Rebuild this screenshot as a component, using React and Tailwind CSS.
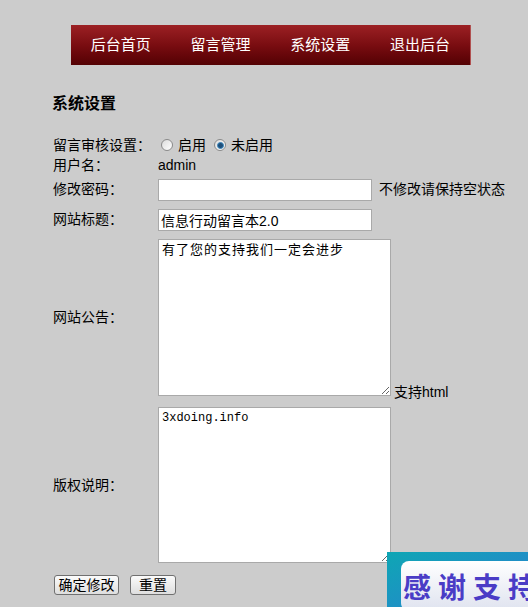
import React from 'react';

const navItems = ['后台首页', '留言管理', '系统设置', '退出后台'];

const Radio = ({ checked }) => (
  <span className="inline-flex items-center justify-center w-[12px] h-[12px] rounded-full border border-[#8a8a8a] bg-gradient-to-br from-[#dcdcdc] to-white mr-[5px]">
    {checked && <span className="w-[7px] h-[7px] rounded-full bg-[#1e4f7a] border border-[#3d8ac0]" />}
  </span>
);

const Btn = ({ children, w }) => (
  <button
    type="button"
    className={`h-[20px] ${w} rounded-[3px] border border-[#707070] bg-gradient-to-b from-[#fbfbfb] to-[#dedede] text-[14px] leading-none text-black`}
  >
    {children}
  </button>
);

export default function App() {
  return (
    <div
      className="relative w-[528px] h-[607px] overflow-hidden bg-[#cccccc] text-black text-[14px]"
      style={{ fontFamily: '"Liberation Sans", "Noto Sans CJK SC", sans-serif' }}
    >
      {/* top menu */}
      <div className="mt-[25px] ml-[71px] w-[400px] h-[40px] flex bg-gradient-to-b from-[#9c2024] via-[#7a0d11] to-[#540204] border-r border-[#b05050]">
        {navItems.map((item) => (
          <div key={item} className="flex-1 flex items-center justify-center text-white text-[15px]">
            {item}
          </div>
        ))}
      </div>

      <div className="pl-[52px]">
        <h2 className="mt-[29px] h-[20px] leading-[20px] text-[16px] font-bold">系统设置</h2>

        <div className="mt-[21px] h-[20px] flex items-center pl-[1px]">
          <div className="w-[105px]">留言审核设置：</div>
          <div className="flex items-center ml-[3px]">
            <Radio />
            <span>启用</span>
            <span className="ml-[8px]" />
            <Radio checked />
            <span>未启用</span>
          </div>
        </div>

        <div className="h-[20px] flex items-center pl-[1px]">
          <div className="w-[105px]">用户名：</div>
          <div>admin</div>
        </div>

        <div className="mt-[3px] h-[23px] flex items-center pl-[1px]">
          <div className="w-[105px]">修改密码：</div>
          <input type="password" className="w-[214px] h-[22px] bg-white border border-[#a9a9a9] outline-none" />
          <span className="ml-[7px]">不修改请保持空状态</span>
        </div>

        <div className="mt-[7px] h-[23px] flex items-center pl-[1px]">
          <div className="w-[105px]">网站标题：</div>
          <input
            type="text"
            defaultValue="信息行动留言本2.0"
            className="w-[214px] h-[22px] px-[2px] bg-white border border-[#a9a9a9] outline-none text-[14px]"
          />
        </div>

        <div className="mt-[8px] flex items-center pl-[1px]">
          <div className="w-[105px]">网站公告：</div>
          <textarea
            defaultValue="有了您的支持我们一定会进步"
            className="w-[233px] h-[157px] px-[3px] py-[1px] bg-white border border-[#a9a9a9] outline-none text-[13px] leading-[18px] tracking-[1px]"
          />
          <span className="self-end ml-[3px] leading-[16px] -mb-[4px]">支持html</span>
        </div>

        <div className="mt-[11px] flex items-center pl-[1px]">
          <div className="w-[105px]">版权说明：</div>
          <textarea
            defaultValue="3xdoing.info"
            className="w-[233px] h-[156px] px-[3px] py-[1px] bg-white border border-[#a9a9a9] outline-none text-[12px] leading-[18px]"
            style={{ fontFamily: '"Liberation Mono", monospace' }}
          />
        </div>

        <div className="mt-[12px] flex items-center gap-[11px] pl-[2px]">
          <Btn w="w-[65px]">确定修改</Btn>
          <Btn w="w-[46px]">重置</Btn>
        </div>
      </div>

      {/* floating banner */}
      <div className="absolute left-[387px] top-[552px] w-[160px] h-[70px] bg-gradient-to-br from-[#0ea6b4] via-[#1f8ec6] to-[#3a68cc] pl-[14px] pt-[9px]">
        <div className="h-[50px] w-[150px] rounded-[8px] bg-gradient-to-b from-white to-[#dfe3ef] flex items-center pl-[2px] overflow-hidden whitespace-nowrap">
          <span
            className="text-[28px] font-bold tracking-[7px] text-[#4a3cc6] leading-none"
            style={{ fontFamily: '"Noto Sans CJK SC", sans-serif' }}
          >
            感谢支持
          </span>
        </div>
      </div>
    </div>
  );
}
